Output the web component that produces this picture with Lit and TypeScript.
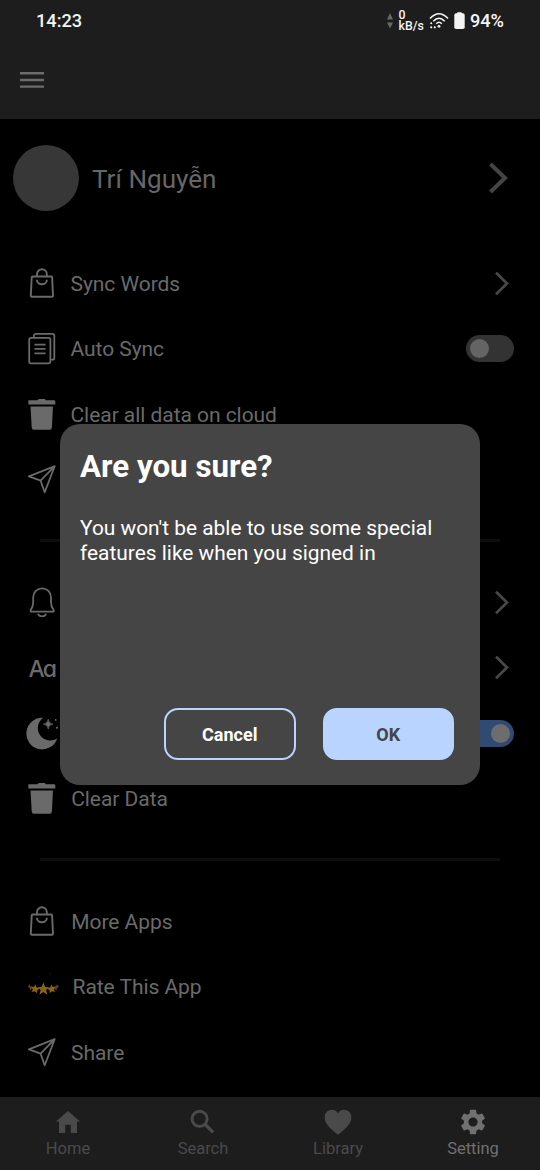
import { LitElement, html, svg, css, nothing, type TemplateResult } from "lit";
import { customElement, property } from "lit/decorators.js";
import { classMap } from "lit/directives/class-map.js";

const bag = svg`<g fill="none" stroke="currentColor" stroke-width="1.900" stroke-linejoin="round">
  <path d="M6.600 9.500H25.200a.9 .9 0 0 1 .9 .8L27 28.600a1 1 0 0 1-1 1.200H5.800a1 1 0 0 1-1-1.200L5.700 10.300a.9 .9 0 0 1 .9-.8Z"/>
  <path d="M11 9.500V7.200a4.900 4.900 0 0 1 9.800 0V9.500M10.900 12.800a5 4.500 0 0 0 10 0"/></g>`;
const doc = svg`<g fill="none" stroke="currentColor" stroke-width="1.800" stroke-linejoin="round">
  <rect x="3.200" y="5.800" width="21.200" height="25.500" rx="1.800"/>
  <path d="M8 5.300V3.500A1.600 1.600 0 0 1 9.600 1.900H26.600A1.700 1.700 0 0 1 28.300 3.600V26A1.700 1.700 0 0 1 26.600 27.700H25M8.400 12.600H19.600M8.400 16.900H19.600M8.400 21.400H19.600"/></g>`;
const trash = svg`<path fill="currentColor" d="M11.500 2.200 12.800 .9H18.700L20 2.200H28.300A1 1 0 0 1 29.300 3.200V6.600H2.300V3.200A1 1 0 0 1 3.300 2.200ZM4.500 8.600H27L25.900 29.500A2.300 2.300 0 0 1 23.600 31.700H8A2.300 2.300 0 0 1 5.700 29.500Z"/>`;
const send = svg`<g fill="none" stroke="currentColor" stroke-width="1.800" stroke-linejoin="round">
  <path d="M2.900 13.400 28.700 3.200 18.700 29.300 14.600 17.700ZM14.600 17.700 28.700 3.200"/></g>`;
const bell = svg`<g fill="none" stroke="currentColor" stroke-width="1.800" stroke-linecap="round" stroke-linejoin="round">
  <path d="M7.200 11.200A8.900 8.900 0 0 1 25 11.200V16.200C25 20.200 26 21.900 27.700 24V25.600H4.700V24C6.300 21.900 7.200 20.200 7.200 16.200ZM12.300 28.400C13.500 31.100 18.700 31.100 19.900 28.400"/></g>`;
const moon = svg`<g fill="currentColor">
  <path d="M17.300 .8A11.900 11.900 0 0 0 31.200 21.400A15.800 15.800 0 1 1 17.300 .8Z"/>
  <path d="M22.200 2.200Q22.700 6.600 27.100 7.100 22.700 7.600 22.200 12 21.700 7.600 17.300 7.100 21.700 6.600 22.200 2.200Z" stroke="currentColor" stroke-width=".6"/>
  <circle cx="29.700" cy="2.900" r=".9"/><circle cx="31" cy="10.800" r="1"/></g>`;
const stars = svg`<g fill="#8a641c">
  <path d="M17.400 12.500 19.200 16.900 23.500 17.200 20.100 20.100 21.400 24.700 17.400 22.100 13.400 24.700 14.700 20.100 11.300 17.200 15.600 16.900Z"/>
  <path d="M9.300 14.500 10.600 17.500 13.600 18.400 11.400 20.300 10.900 23 8.700 21.300 5.800 22 6.800 19.200 4.500 16.300 8 17Z"/>
  <path d="M25.500 14.500 24.200 17.500 21.200 18.400 23.400 20.300 23.900 23 26.100 21.300 29 22 28 19.200 30.300 16.300 26.800 17Z"/>
  <path opacity=".7" d="M3.700 14.300 4.600 16.700 6.200 18 4.500 20.800 3.700 18.200 1.800 16.600ZM30.900 14.300 30 16.700 28.600 18 30.100 20.800 30.900 18.200 32.800 16.600Z"/>
  <g opacity=".5"><circle cx="13" cy="6.500" r=".5" fill="#444"/><circle cx="24" cy="4" r=".7" fill="#444"/><circle cx="12" cy="27.500" r=".6"/></g></g>`;

const letters = html`<span class="letters">Aa</span>`;

interface Item {
  icon: TemplateResult;
  label?: string;
  end?: "chevron" | "off" | "on";
  text?: boolean;
  nudge?: number;
}

const groups: Item[][] = [
  [
    { icon: bag, label: "Sync Words", end: "chevron" },
    { icon: doc, label: "Auto Sync", end: "off" },
    { icon: trash, label: "Clear all data on cloud" },
    { icon: send },
  ],
  [
    { icon: bell, end: "chevron" },
    { icon: letters, text: true, end: "chevron" },
    { icon: moon, end: "on" },
    { icon: trash, label: "Clear Data", nudge: 0.7 },
  ],
  [
    { icon: bag, label: "More Apps", nudge: 0.7 },
    { icon: stars, label: "Rate This App", nudge: 2 },
    { icon: send, label: "Share", nudge: 0.5 },
  ],
];

@customElement("status-bar")
class StatusBar extends LitElement {
  static styles = css`
    :host { display: flex; height: 41px; align-items: center; justify-content: space-between;
      padding: 0 36px; color: #f4f4f4; font-weight: 500; font-size: 18.200px; }
    .right { display: flex; align-items: center; }
    .arrows { width: 8px; height: 18px; color: #686868; }
    .rate { display: flex; flex-direction: column; font-size: 12.300px; line-height: 11px; margin-left: 5px; }
    .wifi { width: 20px; height: 18px; margin-left: 5px; }
    .batt { width: 11px; height: 18px; margin: 0 5px 0 5px; }
  `;
  render() {
    return html`<span>14:23</span>
      <div class="right">
        <svg class="arrows" viewBox="0 0 8 18" fill="currentColor"><path d="M4 1 7 7.500H1ZM4 16.500 1 10.500H7Z"/></svg>
        <div class="rate"><span>0</span><span>kB/s</span></div>
        <svg class="wifi" viewBox="0 0 20 18" fill="none" stroke="currentColor" stroke-width="1.600">
          <path d="M1 6.500Q10-3 19 6.500M4.300 9.200Q10 3.200 15.700 9.200M7.300 11.700Q10 8.800 12.800 11.700"/>
          <g fill="currentColor" stroke="none"><circle cx="10" cy="14.300" r="1.400"/><circle cx="2.200" cy="11.300" r="1"/><circle cx="2.200" cy="15.300" r="1.100"/><circle cx="5.800" cy="15.300" r="1.100"/></g>
        </svg>
        <svg class="batt" viewBox="0 0 11 18" fill="currentColor"><rect x="3" y=".3" width="5" height="3" rx="1"/><rect x=".3" y="1.300" width="10.400" height="15.700" rx="1.800"/></svg>
        <span>94%</span>
      </div>`;
  }
}

@customElement("setting-row")
class SettingRow extends LitElement {
  @property({ attribute: false }) item!: Item;
  static styles = css`
    :host { display: flex; height: 65.500px; align-items: center; padding: 0 26px; color: #6a6a6a; }
    .icon { width: 34px; height: 34px; flex: none; }
    .letters { width: 34px; flex: none; display: block; text-indent: 2.600px; white-space: nowrap;
      font: 500 23px/34px Inter, sans-serif; font-feature-settings: "cv11" 1; letter-spacing: -2px; padding-top: 1px; }
    .label { flex: 1; font-size: 21px; line-height: 30px; letter-spacing: -0.050px; }
    .chevron { width: 16px; height: 26px; margin-right: 4px; color: #484848; }
    .toggle { display: flex; align-items: center; box-sizing: border-box; width: 48px; height: 27px;
      border-radius: 14px; padding: 0 4px; margin-bottom: 1px; background: #333; }
    .knob { width: 19px; height: 19px; border-radius: 50%; background: #646464; }
    .on { justify-content: flex-end; background: #2f4b73; }
    .on .knob { background: #6d6d6d; }
  `;
  render() {
    const { icon, label, end, text, nudge = 0 } = this.item;
    return html`
      ${text ? icon : html`<svg class="icon" viewBox="0 0 34 34">${icon}</svg>`}
      <span class="label" style="padding-left:${10.500 + nudge}px">${label ?? nothing}</span>
      ${end === "chevron"
        ? html`<svg class="chevron" viewBox="0 0 16 26" fill="none" stroke="currentColor" stroke-width="2.700"><path d="M2 1.800 13 12.500 2 23.200"/></svg>`
        : end
          ? html`<div class=${classMap({ toggle: true, on: end === "on" })}><div class="knob"></div></div>`
          : nothing}`;
  }
}

const tabs = [
  { label: "Home", icon: svg`<path d="M14 3 26 13.500H23V25H16.800V16.700H11.200V25H5V13.500H2Z"/>` },
  { label: "Search", icon: svg`<g fill="none" stroke="currentColor"><circle cx="10.600" cy="10.800" r="7.600" stroke-width="2.900"/><path d="M16 16.200 24.200 24.400" stroke-width="3.400"/></g>` },
  { label: "Library", icon: svg`<path d="M14 26.800C8 21.500 .8 16.500 .8 9.900A7.100 7.100 0 0 1 14 5.400 7.100 7.100 0 0 1 27.200 9.900C27.200 16.500 20 21.500 14 26.800Z"/>` },
  { label: "Setting", active: true, icon: svg`<path transform="translate(-1.200 -1.200) scale(1.270)" d="M19.140 12.940c.04-.3.06-.61.06-.94 0-.32-.02-.64-.07-.94l2.030-1.580c.18-.14.23-.41.12-.61l-1.920-3.320c-.12-.22-.37-.29-.59-.22l-2.390.96c-.5-.38-1.030-.7-1.620-.94l-.36-2.540c-.04-.24-.24-.41-.48-.41h-3.840c-.24 0-.43.17-.47.41l-.36 2.540c-.59.24-1.130.57-1.620.94l-2.390-.96c-.22-.08-.47 0-.59.22L2.740 8.870c-.12.21-.08.47.12.61l2.030 1.580c-.05.3-.09.63-.09.94s.02.64.07.94l-2.030 1.580c-.18.14-.23.41-.12.61l1.920 3.320c.12.22.37.29.59.22l2.390-.96c.5.38 1.030.7 1.620.94l.36 2.540c.05.24.24.41.48.41h3.840c.24 0 .44-.17.47-.41l.36-2.540c.59-.24 1.130-.56 1.620-.94l2.390.96c.22.08.47 0 .59-.22l1.920-3.320c.12-.22.07-.47-.12-.61l-2.010-1.580zM12 15.600c-1.980 0-3.600-1.620-3.600-3.600s1.620-3.600 3.600-3.600 3.600 1.620 3.600 3.600-1.620 3.600-3.600 3.600z"/>` },
];

@customElement("tab-bar")
class TabBar extends LitElement {
  static styles = css`
    :host { display: grid; grid-template-columns: repeat(4, 1fr); height: 73px; flex: none; background: #1d1d1d; }
    .tab { display: flex; flex-direction: column; align-items: center; padding-top: 11px; color: #4a4a4a; }
    .active { color: #707070; }
    .glyph { width: 28px; height: 28px; flex: none; }
    .name { font-size: 16.500px; line-height: 22px; letter-spacing: 0; margin: 2px 0 0 1px; }
  `;
  render() {
    return tabs.map((t) => html`<div class=${classMap({ tab: true, active: !!t.active })}>
      <svg class="glyph" viewBox="0 0 28 28" fill="currentColor">${t.icon}</svg><span class="name">${t.label}</span></div>`);
  }
}

@customElement("confirm-dialog")
class ConfirmDialog extends LitElement {
  static styles = css`
    :host { display: flex; flex-direction: column; box-sizing: border-box; background: #454545; border-radius: 20px;
      color: #fff; padding: 24px 26px 25px 20px; }
    .title { margin: 0; font-size: 31.300px; line-height: 38px; font-weight: 700; }
    .body { margin: 30px 0 0; font-size: 20.900px; line-height: 24.500px; }
    .actions { display: flex; gap: 27px; justify-content: flex-end; margin-top: auto; }
    .btn { box-sizing: border-box; width: 131.500px; height: 52px; border-radius: 14px; border: 2px solid #b8d4ff;
      background: none; color: #fff; font: 700 18px Roboto, sans-serif; padding: 1px 0 0; }
    .primary { background: #b8d4ff; color: #454545; }
  `;
  render() {
    return html`<h2 class="title">Are you sure?</h2>
      <p class="body">You won't be able to use some special<br />features like when you signed in</p>
      <div class="actions"><button class="btn">Cancel</button><button class="btn primary">OK</button></div>`;
  }
}

@customElement("app-root")
class AppRoot extends LitElement {
  static styles = css`
    :host { display: flex; flex-direction: column; position: relative; width: 540px; height: 1170px; overflow: hidden;
      background: #000; font-family: Roboto, "Noto Sans", sans-serif; }
    .top { height: 119px; flex: none; background: #1d1d1d; }
    .menu { display: block; width: 24px; height: 18px; margin: 30px 0 0 20px; color: #6c6c6c; }
    .list { flex: 1; min-height: 0; }
    .profile { display: flex; align-items: center; height: 118px; padding: 0 30px 0 13px; color: #666; }
    .avatar { width: 66px; height: 66px; border-radius: 50%; background: #373737; }
    .name { flex: 1; margin-left: 13px; font-size: 26.100px; line-height: 36px; padding-top: 1px; }
    .chevron { width: 22px; height: 34px; color: #444; }
    .first { padding-top: 14.200px; }
    .rule { height: 3px; background: #0d0d0d; margin: 26px 40px 28px; }
    .dialog { position: absolute; left: 60px; top: 424px; width: 420px; height: 361px; }
  `;
  render() {
    return html`
      <header class="top"><status-bar></status-bar>
        <svg class="menu" viewBox="0 0 24 18" stroke="currentColor" stroke-width="2.400"><path d="M0 2.300H24M0 9H24M0 15.600H24"/></svg>
      </header>
      <main class="list">
        <div class="profile"><div class="avatar"></div><span class="name">Trí Nguyễn</span>
          <svg class="chevron" viewBox="0 0 22 34" fill="none" stroke="currentColor" stroke-width="4"><path d="M2.500 3 17 17 2.500 31"/></svg></div>
        ${groups.map((g, i) => html`${i ? html`<div class="rule"></div>` : nothing}
          <div class=${classMap({ first: i === 0 })}>${g.map((item) => html`<setting-row .item=${item}></setting-row>`)}</div>`)}
      </main>
      <tab-bar></tab-bar>
      <confirm-dialog class="dialog" role="dialog"></confirm-dialog>`;
  }
}
